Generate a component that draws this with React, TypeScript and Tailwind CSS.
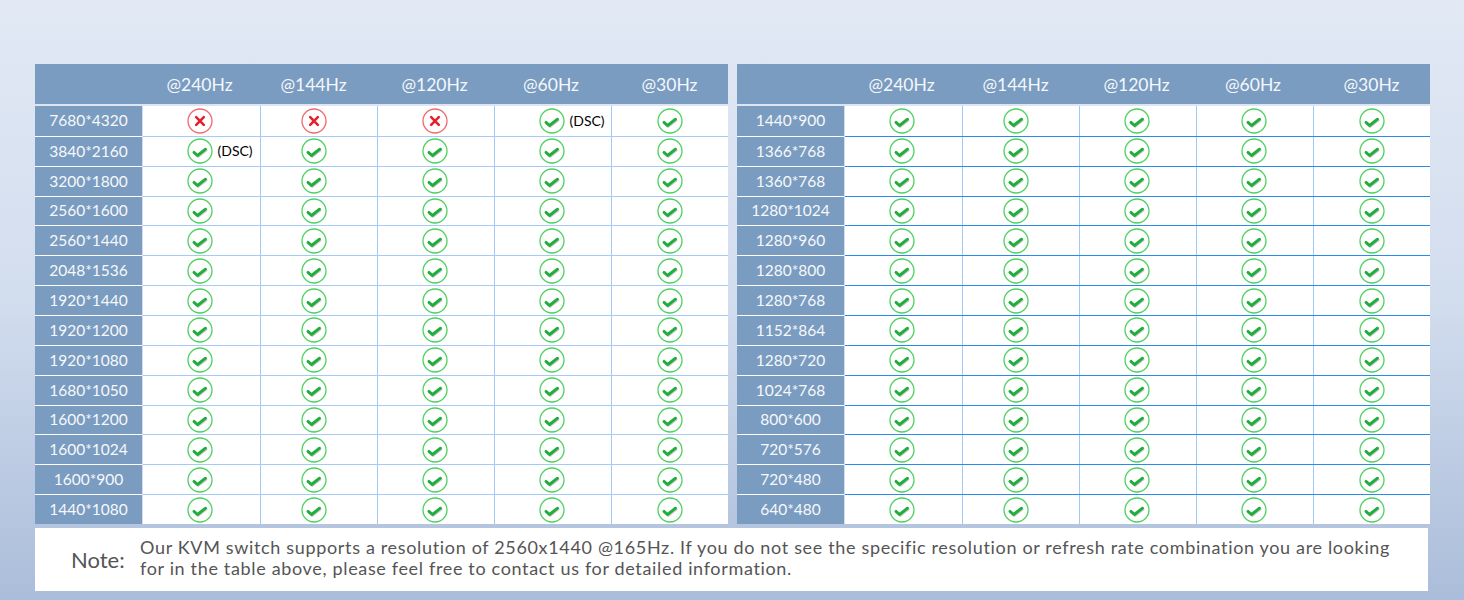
import React from "react";

type Cell = "ok" | "no" | "okd";

const leftRows: { label: string; cells: Cell[] }[] = [
  { label: "7680*4320", cells: ["no", "no", "no", "okd", "ok"] },
  { label: "3840*2160", cells: ["okd", "ok", "ok", "ok", "ok"] },
  ...[
    "3200*1800",
    "2560*1600",
    "2560*1440",
    "2048*1536",
    "1920*1440",
    "1920*1200",
    "1920*1080",
    "1680*1050",
    "1600*1200",
    "1600*1024",
    "1600*900",
    "1440*1080",
  ].map((label) => ({ label, cells: ["ok", "ok", "ok", "ok", "ok"] as Cell[] })),
];

const rightRows: { label: string; cells: Cell[] }[] = [
  "1440*900",
  "1366*768",
  "1360*768",
  "1280*1024",
  "1280*960",
  "1280*800",
  "1280*768",
  "1152*864",
  "1280*720",
  "1024*768",
  "800*600",
  "720*576",
  "720*480",
  "640*480",
].map((label) => ({ label, cells: ["ok", "ok", "ok", "ok", "ok"] as Cell[] }));

const heads = ["@240Hz", "@144Hz", "@120Hz", "@60Hz", "@30Hz"];
const colPad = ["pr-[4px]", "pr-[10px]", "pr-[2px]", "pr-[3px]", "pr-0"];

function CheckIcon() {
  return (
    <svg width="26" height="26" viewBox="0 0 26 26">
      <circle cx="13" cy="13" r="12" fill="#fff" stroke="#4fd160" strokeWidth="1.3" />
      <path d="M7.6 15.4 L11.2 18.6 L19.2 12.2" fill="none" stroke="#bdbdbd" strokeWidth="2.6" strokeLinecap="round" strokeLinejoin="round" opacity="0.8" />
      <path d="M7 14.4 L10.5 17.5 L18.5 11.2" fill="none" stroke="#1fae3c" strokeWidth="2.9" strokeLinecap="round" strokeLinejoin="round" />
    </svg>
  );
}

function CrossIcon() {
  return (
    <svg width="26" height="26" viewBox="0 0 26 26">
      <circle cx="13" cy="13" r="12" fill="#fff" stroke="#f06a70" strokeWidth="1.3" />
      <path d="M9.2 9.2 L16.8 16.8 M16.8 9.2 L9.2 16.8" fill="none" stroke="#e3222c" strokeWidth="2.6" strokeLinecap="round" />
    </svg>
  );
}

function Mark({ c }: { c: Cell }) {
  return (
    <span className="relative flex items-center">
      {c === "no" ? <CrossIcon /> : <CheckIcon />}
      {c === "okd" && (
        <span className="absolute left-full ml-[5px] text-[14px] leading-none text-black whitespace-nowrap">
          (DSC)
        </span>
      )}
    </span>
  );
}

function Table({
  rows,
  hLine,
}: {
  rows: { label: string; cells: Cell[] }[];
  hLine: string;
}) {
  return (
    <div className="w-[693px] flex flex-col">
      <div className="h-[40px] bg-[#7a9cc0] flex text-[#f4f7fb] text-[17.5px]">
        <div className="w-[108px] shrink-0" />
        {heads.map((h, i) => (
          <div key={h} className={`w-[117px] shrink-0 flex items-center justify-center pt-[2px] ${colPad[i]}`}>
            {h}
          </div>
        ))}
      </div>
      <div className="mt-[2px] h-[418px] grid grid-rows-[repeat(14,1fr)] bg-[#d3deec]">
        {rows.map((r, ri) => (
          <div key={r.label} className="flex min-h-0">
            <div
              className={`w-[107px] shrink-0 bg-[#7a9cc0] text-[#f6f8fb] text-[15.5px] flex items-center justify-center ${
                ri > 0 ? "border-t border-white" : ""
              }`}
            >
              {r.label}
            </div>
            <div className={`ml-[1px] w-[585px] shrink-0 bg-white flex ${ri > 0 ? `border-t ${hLine}` : ""}`}>
              {r.cells.map((c, ci) => (
                <div
                  key={ci}
                  className={`w-[117px] shrink-0 flex items-center justify-center ${colPad[ci]} ${
                    ci > 0 ? "border-l border-[#9fcaf6]" : ""
                  }`}
                >
                  <Mark c={c} />
                </div>
              ))}
            </div>
          </div>
        ))}
      </div>
    </div>
  );
}

export default function App() {
  return (
    <div
      className="min-h-[600px] w-full bg-gradient-to-b from-[#e2e9f5] via-[#d2ddee] to-[#abbdda] pt-[64px] px-[35px]"
      style={{ fontFamily: "Lato, 'Noto Sans', sans-serif" }}
    >
      <div className="flex gap-[9px]">
        <Table rows={leftRows} hLine="border-[#a3cbf5]" />
        <Table rows={rightRows} hLine="border-[#2a8bef]" />
      </div>
      <div className="mt-[4px] w-[1393px] h-[63px] bg-white flex items-center text-[#555] pb-[3px]">
        <div className="w-[105px] shrink-0 pl-[36px] text-[22px] pt-[2px]">Note:</div>
        <div className="text-[18px] leading-[21px] tracking-[0.66px] whitespace-nowrap">
          <div>
            Our KVM switch supports a resolution of 2560x1440 @165Hz. If you do not see the specific resolution or refresh rate combination you are looking
          </div>
          <div>for in the table above, please feel free to contact us for detailed information.</div>
        </div>
      </div>
    </div>
  );
}
